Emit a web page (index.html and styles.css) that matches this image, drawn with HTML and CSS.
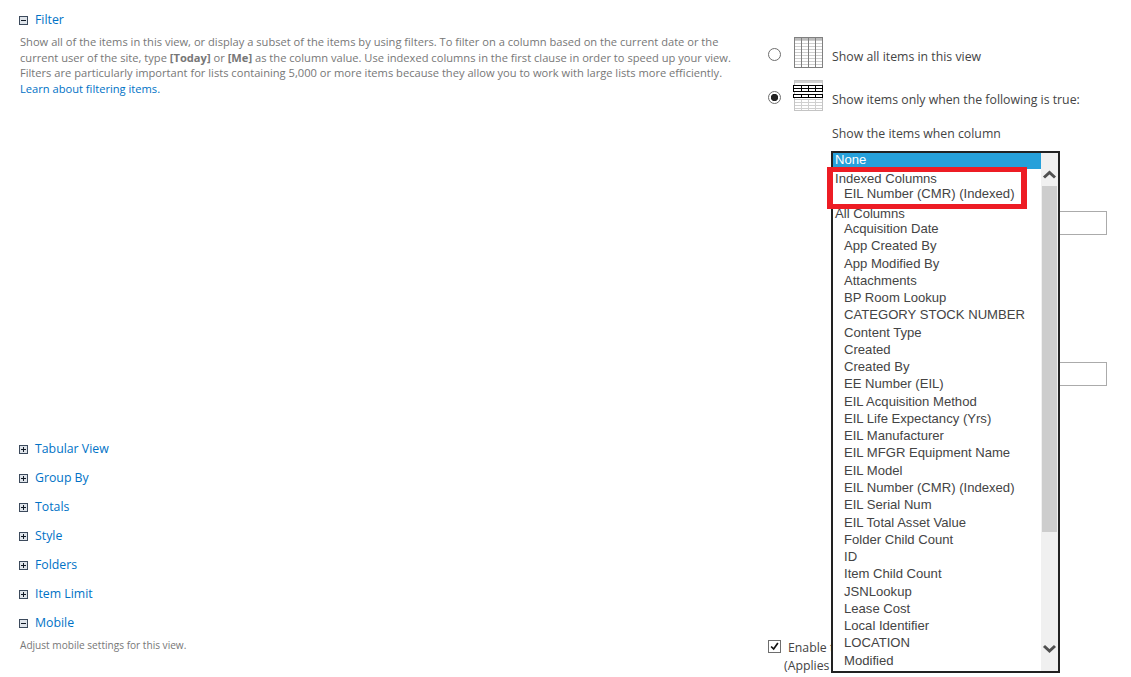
FILE: index.html
```html
<!DOCTYPE html>
<html lang="en">
<head>
<meta charset="utf-8">
<title>Edit View</title>
<link rel="stylesheet" href="styles.css">
</head>
<body>
<main class="page">
  <section class="left">
    <div class="sec-head"><svg class="tog" viewBox="0 0 9 9"><rect x=".5" y=".5" width="8" height="8" fill="#dfe4ea" stroke="#3c4a5c"/><path d="M2 4.500h5" stroke="#111a26"/></svg><a class="sec-title">Filter</a></div>
    <p class="desc filter-desc">Show all of the items in this view, or display a subset of the items by using filters. To filter on a column based on the current date or the<br>current user of the site, type <b>[Today]</b> or <b>[Me]</b> as the column value. Use indexed columns in the first clause in order to speed up your view.<br>Filters are particularly important for lists containing 5,000 or more items because they allow you to work with large lists more efficiently.<br><a class="link">Learn about filtering items.</a></p>
    <div class="collapsed">
      <div class="sec-head"><svg class="tog" viewBox="0 0 9 9"><rect x=".5" y=".5" width="8" height="8" fill="#dfe4ea" stroke="#3c4a5c"/><path d="M2 4.500h5M4.500 2v5" stroke="#111a26"/></svg><a class="sec-title">Tabular View</a></div>
      <div class="sec-head"><svg class="tog" viewBox="0 0 9 9"><rect x=".5" y=".5" width="8" height="8" fill="#dfe4ea" stroke="#3c4a5c"/><path d="M2 4.500h5M4.500 2v5" stroke="#111a26"/></svg><a class="sec-title">Group By</a></div>
      <div class="sec-head"><svg class="tog" viewBox="0 0 9 9"><rect x=".5" y=".5" width="8" height="8" fill="#dfe4ea" stroke="#3c4a5c"/><path d="M2 4.500h5M4.500 2v5" stroke="#111a26"/></svg><a class="sec-title">Totals</a></div>
      <div class="sec-head"><svg class="tog" viewBox="0 0 9 9"><rect x=".5" y=".5" width="8" height="8" fill="#dfe4ea" stroke="#3c4a5c"/><path d="M2 4.500h5M4.500 2v5" stroke="#111a26"/></svg><a class="sec-title">Style</a></div>
      <div class="sec-head"><svg class="tog" viewBox="0 0 9 9"><rect x=".5" y=".5" width="8" height="8" fill="#dfe4ea" stroke="#3c4a5c"/><path d="M2 4.500h5M4.500 2v5" stroke="#111a26"/></svg><a class="sec-title">Folders</a></div>
      <div class="sec-head"><svg class="tog" viewBox="0 0 9 9"><rect x=".5" y=".5" width="8" height="8" fill="#dfe4ea" stroke="#3c4a5c"/><path d="M2 4.500h5M4.500 2v5" stroke="#111a26"/></svg><a class="sec-title">Item Limit</a></div>
      <div class="sec-head"><svg class="tog" viewBox="0 0 9 9"><rect x=".5" y=".5" width="8" height="8" fill="#dfe4ea" stroke="#3c4a5c"/><path d="M2 4.500h5" stroke="#111a26"/></svg><a class="sec-title">Mobile</a></div>
    </div>
    <p class="desc mobile-desc">Adjust mobile settings for this view.</p>
  </section>

  <section class="right">
    <div class="opt opt-all">
      <span class="radio"></span>
      <svg class="grid-icon" viewBox="0 0 29 31"><rect x=".5" y=".5" width="28" height="30" fill="#fff" stroke="#808080"/><rect x="1" y="1" width="27" height="2" fill="#bbb"/><path d="M1 3.500h27M1 6.500h27M1 9.500h27M1 12.500h27M1 15.500h27M1 18.500h27M1 21.500h27M1 24.500h27M1 27.500h27" stroke="#cfcfcf"/><path d="M7.500 1v29M14.500 1v29M21.500 1v29" stroke="#808080"/></svg>
      <span class="opt-text">Show all items in this view</span>
    </div>
    <div class="opt opt-some">
      <span class="radio radio-on"></span>
      <svg class="grid-icon" viewBox="0 0 30 31"><rect x="1.500" y=".5" width="28" height="30" fill="#fff" stroke="#c4c4c4"/><rect x="2" y="1" width="27" height="2" fill="#d0d0d0"/><path d="M2 19.500h27M2 22.500h27M2 25.500h27M2 28.500h27M8.500 19v11M15.500 19v11M22.500 19v11" stroke="#d0d0d0"/><rect x=".5" y="5.500" width="29" height="6" fill="#fff" stroke="#000"/><rect x=".5" y="14.500" width="29" height="3" fill="#fff" stroke="#000"/><path d="M1 8.500h28M8.500 5v6M15.500 5v6M22.500 5v6M8.500 14v4M15.500 14v4M22.500 14v4" stroke="#000"/></svg>
      <span class="opt-text">Show items only when the following is true:</span>
    </div>
    <p class="when">Show the items when column</p>
    <div class="value-box value-one"></div>
    <div class="value-box value-two"></div>
    <div class="mobile-opt">
      <span class="check"><svg viewBox="0 0 13 13"><path d="M2.500 6.500l3 3 5-7" fill="none" stroke="#111" stroke-width="2"/></svg></span>
      <span class="mobile-text">Enable t<br><span class="applies">(Applies</span></span>
    </div>
  </section>

  <div class="dropdown">
    <div class="list">
      <div class="selected">None</div>
      <div class="group first-group">Indexed Columns</div>
      <div class="item">EIL Number (CMR) (Indexed)</div>
      <div class="group">All Columns</div>
      <div class="item">Acquisition Date</div>
      <div class="item">App Created By</div>
      <div class="item">App Modified By</div>
      <div class="item">Attachments</div>
      <div class="item">BP Room Lookup</div>
      <div class="item">CATEGORY STOCK NUMBER</div>
      <div class="item">Content Type</div>
      <div class="item">Created</div>
      <div class="item">Created By</div>
      <div class="item">EE Number (EIL)</div>
      <div class="item">EIL Acquisition Method</div>
      <div class="item">EIL Life Expectancy (Yrs)</div>
      <div class="item">EIL Manufacturer</div>
      <div class="item">EIL MFGR Equipment Name</div>
      <div class="item">EIL Model</div>
      <div class="item">EIL Number (CMR) (Indexed)</div>
      <div class="item">EIL Serial Num</div>
      <div class="item">EIL Total Asset Value</div>
      <div class="item">Folder Child Count</div>
      <div class="item">ID</div>
      <div class="item">Item Child Count</div>
      <div class="item">JSNLookup</div>
      <div class="item">Lease Cost</div>
      <div class="item">Local Identifier</div>
      <div class="item">LOCATION</div>
      <div class="item">Modified</div>
    </div>
    <div class="scrollbar">
      <svg class="arrow" viewBox="0 0 17 17"><path d="M3 11.500l5.500-5 5.500 5" fill="none" stroke="#505050" stroke-width="3"/></svg>
      <div class="thumb"></div>
      <svg class="arrow arrow-down" viewBox="0 0 17 17"><path d="M3 6l5.500 5 5.500-5" fill="none" stroke="#505050" stroke-width="3"/></svg>
    </div>
    <div class="highlight"></div>
  </div>
</main>
</body>
</html>
```
FILE: styles.css
```css
* { box-sizing: border-box; }
html, body { margin: 0; padding: 0; background: #fff; }
body { font-family: "Open Sans", "Noto Sans", sans-serif; color: #444; overflow: hidden; }
.page { position: relative; width: 1131px; height: 677px; display: flex; overflow: hidden; }
.left { width: 768px; padding: 11px 0 0 19px; flex: none; }
.sec-head { display: flex; align-items: center; height: 18px; }
.tog { width: 9px; height: 9px; flex: none; margin-right: 7px; }
.sec-title { font-size: 12.3px; color: #0072c6; line-height: 18px; }
.desc { margin: 0; font-size: 11.13px; color: #777; }
.desc b { font-weight: 700; }
.filter-desc { margin: 5px 0 0 1px; line-height: 15.5px; height: 406px; }
.link { color: #0072c6; }
.collapsed { display: flex; flex-direction: column; gap: 11px; }
.mobile-desc { margin: 6px 0 0 1px; line-height: 15px; font-size: 10.1px; }
.right { position: relative; flex: 1; font-size: 12.3px; color: #444; }
.opt { display: flex; align-items: flex-start; height: 43px; }
.opt-all { margin-top: 37px; }
.radio { width: 13px; height: 13px; margin: 11px 13px 0 0; border: 1px solid #6e6e6e; border-radius: 50%; background: #fff; flex: none; }
.radio-on { background: radial-gradient(circle, #222 0 3.4px, #fff 3.9px); }
.grid-icon { width: 29px; height: 31px; flex: none; margin-right: 9px; }
.opt-some .grid-icon { width: 30px; margin-left: -1px; }
.opt-text { margin-top: 11px; line-height: 17px; }
.when { margin: 2px 0 0 64px; line-height: 17px; }
.value-box { position: absolute; left: 290px; width: 49px; height: 24px; border: 1px solid #ababab; background: #fff; }
.value-one { top: 211px; }
.value-two { top: 362px; }
.mobile-opt { position: absolute; left: 0; top: 639px; display: flex; }
.check { width: 13px; height: 13px; margin: 1px 7px 0 0; border: 1px solid #6e6e6e; flex: none; display: block; }
.check svg { display: block; width: 11px; height: 11px; }
.mobile-text { line-height: 18px; white-space: nowrap; }
.applies { margin-left: -4px; }
.dropdown { position: absolute; left: 831px; top: 151px; width: 229px; height: 522px; border: 2px solid #222; background: #fff; display: flex; font-family: "Liberation Sans", Arial, sans-serif; font-size: 13.1px; color: #444; }
.list { width: 208px; flex: none; white-space: nowrap; overflow: hidden; }
.selected { background: #26a0da; color: #fff; height: 16px; line-height: 13px; padding-left: 2px; }
.group { line-height: 17.28px; height: 17.28px; padding-left: 2px; margin-top: 2.72px; }
.first-group { margin-top: 1px; }
.item { line-height: 17.28px; height: 17.28px; padding-left: 11px; }
.group + .item { margin-top: -2.28px; }
.scrollbar { width: 17px; flex: none; background: #f0f0f0; display: flex; flex-direction: column; align-items: center; padding-top: 13px; }
.arrow { width: 17px; height: 17px; flex: none; }
.arrow-down { margin-top: 108px; }
.thumb { width: 15px; height: 346px; background: #cdcdcd; margin-top: 3px; }
.highlight { position: absolute; left: -6px; top: 14px; width: 200px; height: 42px; border-style: solid; border-color: #ed1c24; border-width: 5px 6px; }
```
